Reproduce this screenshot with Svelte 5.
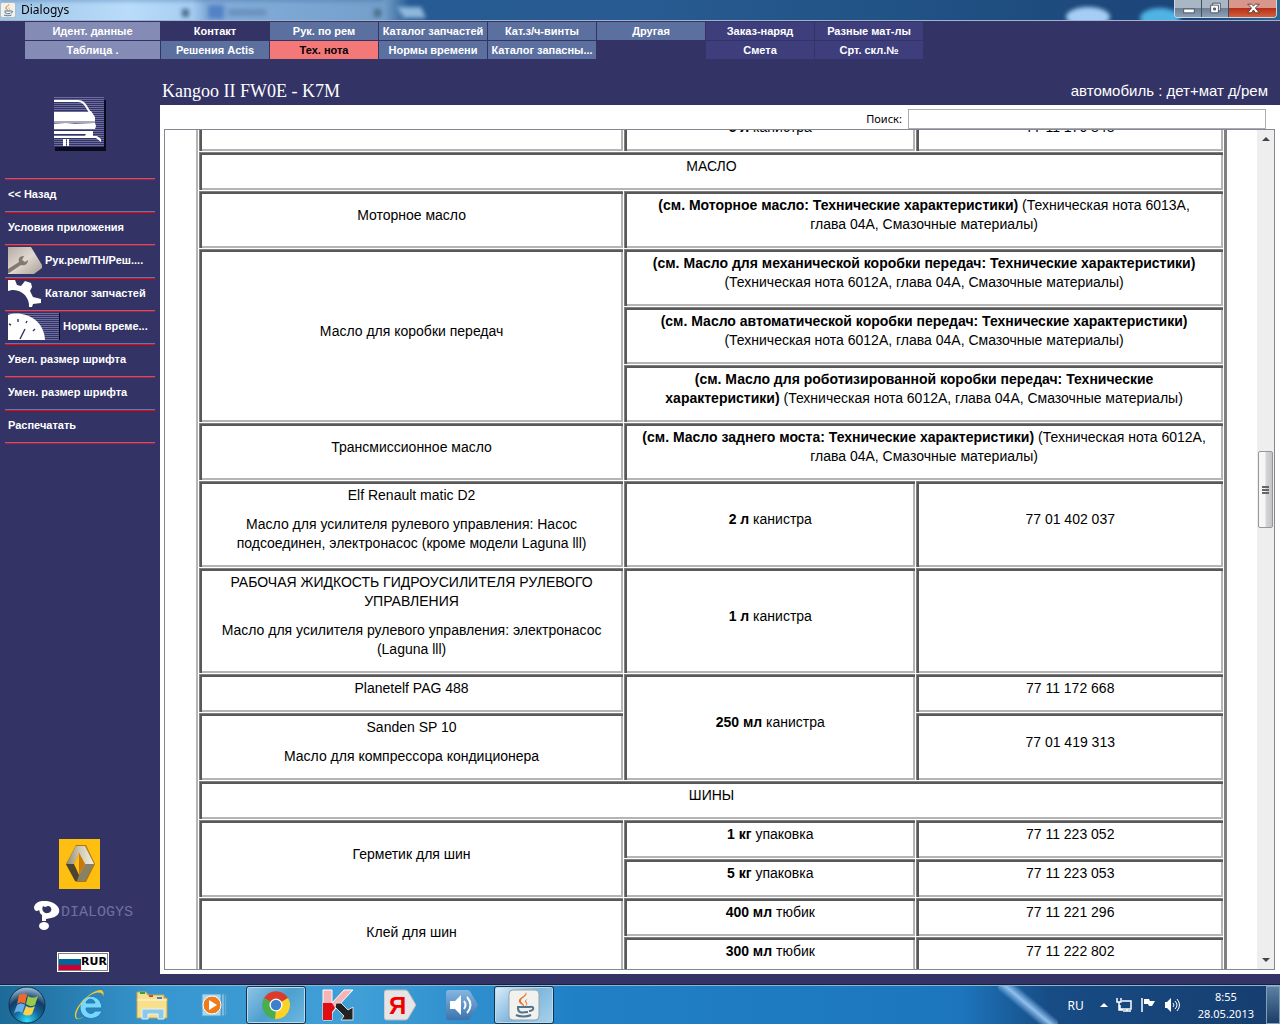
<script lang="ts">
  import { onMount } from 'svelte';

  interface Tab {
    label: string;
    tone: 'pale' | 'base' | 'blue' | 'violet' | 'active' | 'empty';
  }

  interface Cell {
    lines?: string[];
    strong?: string;
    text?: string;
    cols?: number;
    rows?: number;
  }

  const tabs: Tab[] = [
    { label: 'Идент. данные', tone: 'pale' },
    { label: 'Контакт', tone: 'base' },
    { label: 'Рук. по рем', tone: 'blue' },
    { label: 'Каталог запчастей', tone: 'blue' },
    { label: 'Кат.з/ч-винты', tone: 'blue' },
    { label: 'Другая', tone: 'blue' },
    { label: 'Заказ-наряд', tone: 'violet' },
    { label: 'Разные мат-лы', tone: 'violet' },
    { label: 'Таблица .', tone: 'pale' },
    { label: 'Решения Actis', tone: 'blue' },
    { label: 'Тех. нота', tone: 'active' },
    { label: 'Нормы времени', tone: 'blue' },
    { label: 'Каталог запасны...', tone: 'blue' },
    { label: '', tone: 'empty' },
    { label: 'Смета', tone: 'violet' },
    { label: 'Срт. скл.№', tone: 'violet' }
  ];

  const menu = [
    { label: '<< Назад', icon: '' },
    { label: 'Условия приложения', icon: '' },
    { label: 'Рук.рем/ТН/Реш....', icon: 'wrench' },
    { label: 'Каталог запчастей', icon: 'gear' },
    { label: 'Нормы време...', icon: 'clock' },
    { label: 'Увел. размер шрифта', icon: '' },
    { label: 'Умен. размер шрифта', icon: '' },
    { label: 'Распечатать', icon: '' }
  ];

  const note = '(Техническая нота 6012A, глава 04A, Смазочные материалы)';

  const rows: Cell[][] = [
    [{ lines: [''] }, { strong: '5 л', text: 'канистра' }, { lines: ['77 11 170 848'] }],
    [{ lines: ['МАСЛО'], cols: 3 }],
    [
      { lines: ['Моторное масло'] },
      {
        strong: '(см. Моторное масло: Технические характеристики)',
        text: '(Техническая нота 6013A, глава 04A, Смазочные материалы)',
        cols: 2
      }
    ],
    [
      { lines: ['Масло для коробки передач'], rows: 3 },
      { strong: '(см. Масло для механической коробки передач: Технические характеристики)', text: note, cols: 2 }
    ],
    [{ strong: '(см. Масло автоматической коробки передач: Технические характеристики)', text: note, cols: 2 }],
    [{ strong: '(см. Масло для роботизированной коробки передач: Технические характеристики)', text: note, cols: 2 }],
    [
      { lines: ['Трансмиссионное масло'] },
      { strong: '(см. Масло заднего моста: Технические характеристики)', text: note, cols: 2 }
    ],
    [
      {
        lines: [
          'Elf Renault matic D2',
          'Масло для усилителя рулевого управления: Насос подсоединен, электронасос (кроме модели Laguna lll)'
        ]
      },
      { strong: '2 л', text: 'канистра' },
      { lines: ['77 01 402 037'] }
    ],
    [
      {
        lines: [
          'РАБОЧАЯ ЖИДКОСТЬ ГИДРОУСИЛИТЕЛЯ РУЛЕВОГО УПРАВЛЕНИЯ',
          'Масло для усилителя рулевого управления: электронасос (Laguna lll)'
        ]
      },
      { strong: '1 л', text: 'канистра' },
      { lines: [''] }
    ],
    [{ lines: ['Planetelf PAG 488'] }, { strong: '250 мл', text: 'канистра', rows: 2 }, { lines: ['77 11 172 668'] }],
    [{ lines: ['Sanden SP 10', 'Масло для компрессора кондиционера'] }, { lines: ['77 01 419 313'] }],
    [{ lines: ['ШИНЫ'], cols: 3 }],
    [{ lines: ['Герметик для шин'], rows: 2 }, { strong: '1 кг', text: 'упаковка' }, { lines: ['77 11 223 052'] }],
    [{ strong: '5 кг', text: 'упаковка' }, { lines: ['77 11 223 053'] }],
    [{ lines: ['Клей для шин'], rows: 2 }, { strong: '400 мл', text: 'тюбик' }, { lines: ['77 11 221 296'] }],
    [{ strong: '300 мл', text: 'тюбик' }, { lines: ['77 11 222 802'] }]
  ];

  let viewport: HTMLDivElement;
  let query = $state('');

  onMount(() => {
    viewport.scrollTop = 18;
  });
</script>

{#snippet java()}
  <svg class="java" viewBox="0 0 32 32" aria-hidden="true">
    <rect x="1" y="1" width="30" height="30" rx="4" fill="#f1f1ee" stroke="#97a3ab" />
    <path d="M18 3c3 4-6 6-5 9 0 2 4 3 3 6-1-3-6-3-5-7 1-3 7-4 7-8zM21 9c-4 2-5 3-3 5 1 1 0 3-2 4 5-2 3-4 2-6 0-1 1-2 3-3z" fill="#e4742b" />
    <path d="M9 18h13M22 18c5-1 4 4-1 4M10 19c0 5 3 5 10 4M8 26c4 2 11 2 15 0" fill="none" stroke="#53748f" stroke-width="2" />
  </svg>
{/snippet}

<div class="app">
  <header class="titlebar">
    {@render java()}
    <span class="caption">Dialogys</span>
    <svg class="backdrop" viewBox="0 0 1280 20" preserveAspectRatio="none" aria-hidden="true">
      <defs>
        <linearGradient id="sky" x2="1" y2="0">
          <stop offset="0" stop-color="#9fc4e6" />
          <stop offset="0.1" stop-color="#b9dcfa" />
          <stop offset="0.15" stop-color="#a8cdf2" />
          <stop offset="0.16" stop-color="#86aedb" />
          <stop offset="0.3" stop-color="#739fca" />
          <stop offset="0.32" stop-color="#265b93" />
          <stop offset="0.5" stop-color="#285b91" />
          <stop offset="0.75" stop-color="#205083" />
          <stop offset="0.93" stop-color="#1c4477" />
          <stop offset="1" stop-color="#2b6690" />
        </linearGradient>
        <filter id="soft"><feGaussianBlur stdDeviation="2" /></filter>
      </defs>
      <rect width="1280" height="20" fill="url(#sky)" />
      <g filter="url(#soft)">
        <path d="M0-2h384v3H0z" fill="#2f5f94" opacity="0.5" />
        <rect x="208" y="5" width="16" height="14" fill="#5283c5" />
        <rect x="228" y="9" width="38" height="7" fill="#6a92be" />
        <rect x="182" y="9" width="7" height="8" fill="#4b6d8f" />
        <rect x="374" y="9" width="7" height="8" fill="#4b6d8f" />
        <path d="M397 7h24l5 11h-22z" fill="#8fb8db" />
        <ellipse cx="1088" cy="17" rx="22" ry="10" fill="#a5cdf5" />
        <ellipse cx="1160" cy="18" rx="20" ry="10" fill="#4fb3e3" />
      </g>
    </svg>
    <div class="window-buttons">
      <button type="button" aria-label="Свернуть">
        <svg viewBox="0 0 28 17"><rect x="9" y="9" width="11" height="4" fill="#fff" stroke="#4b5664" /></svg>
      </button>
      <button type="button" aria-label="Восстановить">
        <svg viewBox="0 0 28 17">
          <path d="M11 3h8v8h-8z" fill="#fff" stroke="#4b5664" />
          <path d="M9 5h8v8H9z" fill="#fff" stroke="#4b5664" />
          <path d="M12 8h2v2h-2z" fill="#6b7b8c" stroke="#4b5664" />
        </svg>
      </button>
      <button type="button" class="close" aria-label="Закрыть">
        <svg viewBox="0 0 28 17">
          <path d="M9 4h4l2 2 2-2h4l-4 4 4 5h-4l-2-3-2 3H9l4-5z" fill="#fff" stroke="#5e3b3b" />
        </svg>
      </button>
    </div>
  </header>

  <nav class="tabs">
    {#each tabs as tab}
      {#if tab.tone === 'empty'}
        <span></span>
      {:else}
        <button type="button" class="tab tab-{tab.tone}">{tab.label}</button>
      {/if}
    {/each}
  </nav>

  <div class="body">
    <aside class="sidebar">
      <svg class="car" viewBox="0 0 52 54" aria-hidden="true">
        <defs>
          <pattern id="stripes" width="4" height="2" patternUnits="userSpaceOnUse">
            <rect width="4" height="2" fill="#333366" />
            <rect width="4" height="1" fill="#6b6d9e" />
          </pattern>
        </defs>
        <path d="M3 3h49v51H1V50h2z" fill="#0b0b20" />
        <rect width="50" height="50" fill="url(#stripes)" />
        <path d="M0 4h24c7 0 8 6 13 13" fill="none" stroke="#fff" stroke-width="2" />
        <path d="M0 15h34l3-1 4 6v4H0z" fill="#fff" />
        <path d="M0 25h41" stroke="#a9a9b8" stroke-width="2" />
        <path d="M0 27l12-1 9 1 20-1 1 3-1 3H0zM0 34h38v3H0z" fill="#fff" />
        <path d="M33 34h6v5h-8zM0 39h43l4 3v3l-5-4H0zM9 42h3v7H9zM13 42h2v7h-2z" fill="#fff" />
      </svg>

      <ul class="menu">
        {#each menu as item}
          <li>
            <button type="button" class="menu-item">
              {#if item.icon === 'wrench'}
                <svg width="34" height="27" viewBox="0 0 34 27" aria-hidden="true">
                  <defs>
                    <linearGradient id="metal" x1="0" y1="0" x2="1" y2="1">
                      <stop offset="0" stop-color="#b5aca2" />
                      <stop offset="0.5" stop-color="#dfd9d0" />
                      <stop offset="1" stop-color="#a99d92" />
                    </linearGradient>
                  </defs>
                  <path d="M0 0h23l11 18v3l-8 6H0z" fill="url(#metal)" />
                  <path d="M0 22l11-7c-1-4 1-6 5-6l-2 4 3 2 3-2c0 4-3 6-7 5L1 26H0z" fill="#85786e" />
                </svg>
              {:else if item.icon === 'gear'}
                <svg width="34" height="27" viewBox="0 0 34 27" aria-hidden="true">
                  <path d="M0 0h7l2 5 4 1 4-5 6 2 1 4-2 4 3 6 8 2v4l-8 1-1 3h-3c1-9-7-18-17-17l-4 1z" fill="#fff" />
                </svg>
              {:else if item.icon === 'clock'}
                <svg width="52" height="27" viewBox="0 0 52 27" aria-hidden="true">
                  <rect width="51" height="27" fill="url(#stripes)" />
                  <path d="M51 0h1v27h-1z" fill="#0b0b20" />
                  <path d="M0 2C14-3 36 5 37 27H0z" fill="#fff" />
                  <path d="M10 6v3M1 11l2 1M19 8l-1 2M27 16l-2 2M17 16l-5 10" stroke="#333366" stroke-width="1.4" />
                </svg>
              {/if}
              <span>{item.label}</span>
            </button>
          </li>
        {/each}
      </ul>

      <div class="brand">
        <svg class="renault" viewBox="0 0 41 50" aria-hidden="true">
          <defs>
            <linearGradient id="steel" x1="0" y1="0" x2="1" y2="0">
              <stop offset="0" stop-color="#8d876c" />
              <stop offset="0.5" stop-color="#cfcab5" />
              <stop offset="1" stop-color="#f2f0e6" />
            </linearGradient>
          </defs>
          <rect width="41" height="50" fill="#ffbf10" />
          <path d="M17 6h10l9 19-9 18H17L7 25z" fill="#b07416" />
          <path d="M17 7h9l9 18h-9l-6-11-5 11H7z" fill="url(#steel)" />
          <path d="M7 25h8l6 11-2 6h-3z" fill="#4c4531" />
          <path d="M20 36l6-11h9l-9 17h-8z" fill="#898166" />
          <path d="M20 14l6 11-6 11-5-11z" fill="#ffbf10" />
          <path d="M20 14l6 11-6 11z" fill="#c9780b" />
        </svg>
        <div class="dialogys">
          <svg width="26" height="29" viewBox="0 0 26 29" aria-hidden="true">
            <path d="M0 6C2-1 12-1 17 1c11 4 11 14 0 16l-5 1v2H8v-6c-3-2-2-4-3-5-2 2-5 1-5-3z" fill="#fff" />
            <path d="M9 5c-2 4 1 8 5 7 5-1 4-7 0-7-2 0-2 2-5 0z" fill="#333366" />
            <ellipse cx="10" cy="25" rx="5" ry="4" fill="#fff" />
          </svg>
          <span>DIALOGYS</span>
        </div>
        <button type="button" class="currency">
          <svg width="22" height="16" viewBox="0 0 22 16" aria-hidden="true">
            <rect width="22" height="16" fill="#fff" />
            <rect y="5" width="22" height="6" fill="#006699" />
            <rect y="11" width="22" height="5" fill="#cc0033" />
          </svg>
          <span>RUR</span>
        </button>
      </div>
    </aside>

    <main class="main">
      <div class="heading">
        <h1>Kangoo II FW0E - K7M</h1>
        <p>автомобиль : дет+мат д/рем</p>
      </div>

      <div class="page">
        <div class="search">
          <label for="query">Поиск:</label>
          <input id="query" type="text" bind:value={query} />
        </div>

        <div class="frame">
          <div class="viewport" bind:this={viewport}>
            <table>
              <colgroup>
                <col class="col-name" />
                <col class="col-pack" />
                <col />
              </colgroup>
              <tbody>
                {#each rows as row}
                  <tr>
                    {#each row as cell}
                      <td class:wide={cell.cols === 2} colspan={cell.cols ?? 1} rowspan={cell.rows ?? 1}>
                        {#if cell.lines}
                          {#each cell.lines as line}
                            <p>{line}</p>
                          {/each}
                        {:else}
                          <p><b>{cell.strong}</b> {cell.text}</p>
                        {/if}
                      </td>
                    {/each}
                  </tr>
                {/each}
              </tbody>
            </table>
          </div>

          <div class="scrollbar">
            <svg width="8" height="4" viewBox="0 0 8 4" aria-hidden="true"><path d="M4 0l4 4H0z" fill="#444" /></svg>
            <div class="track">
              <div class="thumb"><i></i><i></i><i></i></div>
            </div>
            <svg width="8" height="4" viewBox="0 0 8 4" aria-hidden="true"><path d="M0 0h8L4 4z" fill="#444" /></svg>
          </div>
        </div>
      </div>
    </main>
  </div>

  <footer class="taskbar">
    <button type="button" class="start" aria-label="Пуск">
      <svg width="40" height="38" viewBox="0 0 40 38">
        <defs>
          <radialGradient id="orb" cx="0.5" cy="0.95" r="0.9">
            <stop offset="0" stop-color="#2fe0ff" />
            <stop offset="0.4" stop-color="#14699c" />
            <stop offset="0.7" stop-color="#123c66" />
            <stop offset="1" stop-color="#8fb2cc" />
          </radialGradient>
        </defs>
        <circle cx="20" cy="19" r="18" fill="url(#orb)" stroke="#12324f" />
        <path d="M12 9c3-2 6-2 8 0l-2 9c-3-2-5-2-8 0z" fill="#ee6a2c" />
        <path d="M21 10c3 2 7 2 10 0l-3 9c-3 2-6 1-9-1z" fill="#98cc48" />
        <path d="M10 19c3-2 5-2 8 0l-3 8c-2-2-5-2-8 0z" fill="#6aaee8" />
        <path d="M19 20c3 2 6 2 9 0l-3 8c-3 2-6 2-9 0z" fill="#fbd04a" />
      </svg>
    </button>

    <div class="tasks">
      <button type="button" class="task" aria-label="Internet Explorer">
        <svg viewBox="0 0 32 32">
          <path d="M28 19H12c0 6 7 7 9 3h7c-4 11-22 10-22-4S27 3 28 19zM12 14h9c-1-5-8-5-9 0z" fill="#7ad6fa" stroke="#1d7fc4" />
          <path d="M29 8c1-6-8-6-15 0C6 14 0 26 3 29c2 2 6-1 8-2-5 4-11 5-10-2C2 16 19 0 27 1c3 1 3 4 2 7z" fill="#f4c92a" />
        </svg>
      </button>
      <button type="button" class="task" aria-label="Проводник">
        <svg viewBox="0 0 32 32">
          <path d="M1 3h9l2 3h16v3h3v20H1z" fill="#f6e08e" stroke="#c6a44b" />
          <path d="M4 3h5v2H4z" fill="#2fa144" />
          <path d="M13 6h4v2h-4z" fill="#d2453c" />
          <path d="M21 8h5v2h-5z" fill="#3b87cf" />
          <path d="M1 11h30" stroke="#fff6cf" />
          <path d="M6 30V20h22v10h-6v-5H12v5z" fill="#8cc8ea" stroke="#e2f4fc" />
        </svg>
      </button>
      <button type="button" class="task" aria-label="Windows Media">
        <svg viewBox="0 0 32 32">
          <path d="M4 5h19v22H4zM24 5h2v22h-2zM27 6h1v20h-1z" fill="#a8d8f1" stroke="#4c9dcb" />
          <circle cx="14" cy="16" r="9" fill="#ef7b1a" stroke="#fff" />
          <path d="M11 11l8 5-8 5z" fill="#fff" />
        </svg>
      </button>
      <button type="button" class="task task-open" aria-label="Google Chrome">
        <svg viewBox="0 0 32 32">
          <path d="M16 16L4 9a14 14 0 0 1 24 0z" fill="#dc3a2b" />
          <path d="M16 16l12-7a14 14 0 0 1-13 21z" fill="#fcd224" />
          <path d="M16 16l-1 14A14 14 0 0 1 4 9z" fill="#4aae4c" />
          <circle cx="16" cy="16" r="6.5" fill="#fff" />
          <circle cx="16" cy="16" r="5.2" fill="#3c80c9" />
        </svg>
      </button>
      <button type="button" class="task" aria-label="Kaspersky">
        <svg viewBox="0 0 32 32">
          <path d="M1 1h9v13L22 1h9L14 19l-4 5v7H1z" fill="#f6b4b4" stroke="#fff" />
          <path d="M1 14h9l3 5-3 4v8H1z" fill="#e00d12" />
          <path d="M14 14h5l7 7 5-3v13H19l3-4-9-9z" fill="#222" stroke="#ddd" />
        </svg>
      </button>
      <button type="button" class="task" aria-label="Яндекс">
        <svg viewBox="0 0 32 32">
          <path d="M3 1h18c2 0 3 1 4 3l7 12-7 12c-1 2-2 3-4 3H3c-2 0-3-1-3-3V4c0-2 1-3 3-3z" fill="#e5e5e6" stroke="#b5b5ba" />
          <text x="5" y="25" class="yandex">Я</text>
        </svg>
      </button>
      <button type="button" class="task" aria-label="Громкость">
        <svg viewBox="0 0 32 32">
          <defs>
            <linearGradient id="sound" x2="0" y2="1">
              <stop offset="0" stop-color="#86b5e0" />
              <stop offset="1" stop-color="#3b74ae" />
            </linearGradient>
          </defs>
          <path d="M3 1h18c2 0 3 1 4 3l7 12-7 12c-1 2-2 3-4 3H3c-2 0-3-1-3-3V4c0-2 1-3 3-3z" fill="url(#sound)" />
          <path d="M4 12h5l6-6v20l-6-6H4z" fill="#fff" />
          <path d="M18 12q3 4 0 8M21 8q7 8 0 16" fill="none" stroke="#fff" stroke-width="2" />
        </svg>
      </button>
      <button type="button" class="task task-open task-current" aria-label="Dialogys">
        {@render java()}
      </button>
    </div>

    <div class="tray">
      <span class="lang">RU</span>
      <svg width="8" height="4" viewBox="0 0 8 4" aria-hidden="true"><path d="M4 0l4 4H0z" fill="#fff" /></svg>
      <svg width="16" height="16" viewBox="0 0 16 16" aria-hidden="true">
        <path d="M6 4h9v8H4V8M7 14h8M11 12v2M1 1v4h4V1M3 5v8h4" fill="none" stroke="#fff" stroke-width="1.5" />
      </svg>
      <svg width="16" height="16" viewBox="0 0 16 16" aria-hidden="true">
        <path d="M2 1v14" stroke="#fff" stroke-width="1.5" />
        <path d="M4 2h5l1 2h5l-3 5H9L8 7H4z" fill="#fff" />
      </svg>
      <svg width="16" height="16" viewBox="0 0 16 16" aria-hidden="true">
        <path d="M1 5h2l4-4v14l-4-4H1z" fill="#fff" />
        <path d="M9 6q2 2 0 4M11 4q4 4 0 8M13 2q5 6 0 12" fill="none" stroke="#fff" />
      </svg>
      <div class="clock">
        <time>8:55</time>
        <time>28.05.2013</time>
      </div>
      <button type="button" class="desktop" aria-label="Свернуть все окна"></button>
    </div>
  </footer>
</div>

<style>
  :global(body) {
    margin: 0;
    background: #333366;
  }

  .app {
    display: flex;
    flex-direction: column;
    height: 100vh;
    overflow: hidden;
    background: #333366;
    color: #fff;
    font-family: 'Liberation Sans', Arial, sans-serif;
  }

  button {
    margin: 0;
    padding: 0;
    border: 0;
    border-radius: 0;
    background: none;
    color: inherit;
    font: inherit;
  }

  svg {
    display: block;
    flex: none;
  }

  /* Title bar */
  .titlebar {
    position: relative;
    display: flex;
    flex: none;
    align-items: center;
    gap: 5px;
    height: 20px;
    border-bottom: 1px solid #9fb3cc;
    color: #000;
    font: 12px/20px 'Noto Sans', sans-serif;
  }

  .titlebar .java {
    width: 16px;
    height: 16px;
  }

  .titlebar > :not(.backdrop) {
    z-index: 1;
  }

  .backdrop {
    position: absolute;
    inset: 0;
    width: 100%;
    height: 100%;
  }

  .window-buttons {
    display: flex;
    align-self: flex-start;
    height: 17px;
    margin: 0 3px 0 auto;
    border: 1px solid #c9d8e6;
    border-top: 0;
    border-radius: 0 0 4px 4px;
    overflow: hidden;
  }

  .window-buttons button {
    width: 27px;
    border-right: 1px solid #3c4f63;
    background: linear-gradient(#a9b6c4 50%, #6d8096 50%, #8ea0b4);
  }

  .window-buttons svg {
    width: 27px;
    height: 17px;
  }

  .window-buttons .close {
    display: flex;
    justify-content: center;
    width: 47px;
    border-right: 0;
    background: linear-gradient(#d8978a 50%, #b6301a 50%, #d3603c);
  }

  /* Tabs */
  .tabs {
    display: grid;
    flex: none;
    grid-template-columns: 135px repeat(7, 108px);
    grid-auto-rows: 18px;
    gap: 1px;
    padding: 1px 0 0 25px;
  }

  .tab {
    font-size: 11px;
    font-weight: bold;
    line-height: 18px;
    white-space: nowrap;
  }

  .tab-pale {
    background: #848bb5;
  }

  .tab-blue {
    background: #5c709f;
  }

  .tab-violet {
    background: #3e3e7c;
  }

  .tab-active {
    background: #f47878;
    color: #000;
  }

  .body {
    display: flex;
    flex: 1;
    min-height: 0;
  }

  /* Sidebar */
  .sidebar {
    display: flex;
    flex: none;
    flex-direction: column;
    width: 160px;
  }

  .car {
    width: 52px;
    height: 54px;
    margin: 38px 0 27px 54px;
  }

  .menu {
    margin: 0 5px;
    padding: 0;
    border-bottom: 1px solid #5d78b5;
    box-shadow: 0 1px #f00;
    list-style: none;
  }

  .menu li {
    padding-bottom: 2px;
    border-top: 1px solid #5d78b5;
    box-shadow: inset 0 1px #f00;
  }

  .menu-item {
    display: flex;
    align-items: center;
    gap: 3px;
    width: 100%;
    height: 30px;
    padding: 0 3px;
    font-size: 11px;
    font-weight: bold;
    white-space: nowrap;
  }

  .brand {
    display: flex;
    flex-direction: column;
    align-items: flex-start;
    margin-top: auto;
    padding-bottom: 13px;
  }

  .renault {
    width: 41px;
    height: 50px;
    margin-left: 59px;
  }

  .dialogys {
    display: flex;
    align-items: flex-start;
    gap: 1px;
    margin: 12px 0 22px 34px;
    color: #6f70a0;
    font: 15px/24px 'Liberation Mono', monospace;
  }

  .currency {
    display: flex;
    align-items: center;
    margin-left: 57px;
    padding: 1px;
    border: 1px solid #fff;
    outline: 1px solid #808080;
    outline-offset: -2px;
    background: #fff;
    color: #000;
    font: bold 11px/16px 'DejaVu Sans', sans-serif;
  }

  /* Main area */
  .main {
    display: flex;
    flex: 1;
    flex-direction: column;
    min-width: 0;
    padding-bottom: 11px;
  }

  .heading {
    display: flex;
    flex: none;
    align-items: flex-end;
    justify-content: space-between;
    height: 46px;
    padding: 0 12px 0 2px;
  }

  .heading h1,
  .heading p {
    margin: 0;
    line-height: 28px;
  }

  .heading h1 {
    font-family: 'Liberation Serif', 'Times New Roman', serif;
    font-size: 18px;
    font-weight: normal;
  }

  .heading p {
    font-size: 15px;
  }

  .page {
    display: flex;
    flex: 1;
    flex-direction: column;
    min-height: 0;
    padding: 4px 5px 4px 4px;
    background: #fff;
    color: #000;
  }

  .search {
    display: flex;
    flex: none;
    align-items: center;
    justify-content: flex-end;
    gap: 6px;
    height: 20px;
    padding-right: 9px;
    font: 11px/20px 'Noto Sans', sans-serif;
  }

  .search input {
    box-sizing: border-box;
    width: 32.5%;
    height: 20px;
    border: 1px solid #abadb3;
    background: #fff;
  }

  .frame {
    display: flex;
    flex: 1;
    min-height: 0;
    border: 1px solid #828790;
  }

  .viewport {
    flex: 1;
    min-width: 0;
    padding: 0 30px 0 31px;
    overflow: hidden;
  }

  table {
    width: 100%;
    border: solid #b4b4b4;
    border-width: 0 3px 0 2px;
    border-right-color: #808080;
    border-spacing: 1px;
    table-layout: fixed;
    font-size: 14px;
    line-height: 19px;
    text-align: center;
  }

  .col-name {
    width: 41.5%;
  }

  .col-pack {
    width: 28.5%;
  }

  td {
    padding: 4px;
    border: solid #808080;
    border-width: 1px 0 0 1px;
    box-shadow:
      inset 2px 2px #585858,
      inset -2px -2px #b4b4b4;
  }

  td.wide {
    padding: 4px 15px;
  }

  td p {
    min-height: 19px;
    margin: 0 0 10px;
  }

  .scrollbar {
    display: flex;
    flex: none;
    flex-direction: column;
    align-items: center;
    width: 17px;
    padding: 7px 0;
    box-sizing: border-box;
    background: #eeeeee;
  }

  .track {
    display: flex;
    flex: 1;
    flex-direction: column;
    align-items: center;
    padding-top: 310px;
  }

  .thumb {
    display: flex;
    flex-direction: column;
    align-items: center;
    justify-content: center;
    gap: 1px;
    width: 13px;
    height: 75px;
    border: 1px solid #979797;
    border-radius: 2px;
    background: linear-gradient(90deg, #f6f6f6 45%, #d5d5d8 55%, #c4c4c8);
  }

  .thumb i {
    width: 7px;
    height: 2px;
    background: #666;
  }

  /* Taskbar */
  .taskbar {
    display: flex;
    flex: none;
    align-items: center;
    height: 38px;
    border-top: 1px solid #8fb5d4;
    box-shadow: 0 -1px #14213f;
    background:
      linear-gradient(40deg, transparent 38%, #8fc0ee 50%, transparent 62%) 78vw 0 / 60px 38px no-repeat,
      linear-gradient(90deg, #1c6a97, #3796cf 12%, #3f9fd6 28%, #2080c6 45%, #1d76bd 75%, #174c85 82%, #163d6e);
  }

  .start {
    width: 54px;
    padding-left: 7px;
  }

  .tasks {
    display: flex;
    gap: 2px;
    margin-left: 6px;
  }

  .task {
    display: flex;
    align-items: center;
    justify-content: center;
    box-sizing: border-box;
    width: 60px;
    height: 38px;
  }

  .task svg {
    width: 32px;
    height: 32px;
  }

  .task-open {
    border: 1px solid #14334f;
    border-radius: 3px;
    box-shadow: inset 0 0 0 1px #b7dbf0;
    background: linear-gradient(135deg, #8fc4e6, #4d9fce 50%, #6db9e0);
  }

  .task-current {
    background: linear-gradient(135deg, #dceefa, #7fb6dd 50%, #a9d2ec);
  }

  .yandex {
    fill: #f00000;
    font: bold 24px 'Liberation Sans', sans-serif;
  }

  .tray {
    display: flex;
    align-items: center;
    align-self: stretch;
    gap: 8px;
    margin-left: auto;
    font: 12px/17px 'Noto Sans', sans-serif;
  }

  .lang {
    margin-right: 8px;
  }

  .clock {
    display: flex;
    flex-direction: column;
    align-items: center;
    margin: 0 4px 0 10px;
    font-size: 11px;
  }

  .desktop {
    box-sizing: border-box;
    width: 14px;
    height: 100%;
    border: 1px solid #7f9fbd;
    background: linear-gradient(#5c7fa3, #1c3e66);
  }
</style>
